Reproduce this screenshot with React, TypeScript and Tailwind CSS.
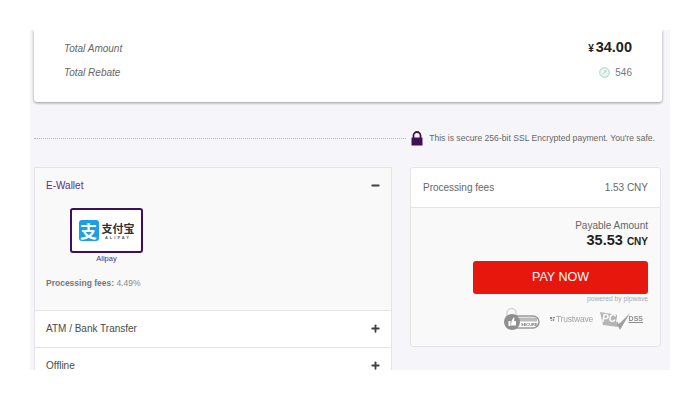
import { Plus, Minus } from "lucide-react";

function AlipayLogo() {
  return (
    <div className="w-[73px] h-[45px] bg-white border-2 border-[#3d0f5c] rounded-[3px] flex items-center justify-center gap-[3px]">
      <div className="w-[20px] h-[21px] bg-[#1a9fe8] rounded-[3px] flex items-center justify-center text-white text-[17px] leading-none font-bold font-['Noto_Sans_CJK_SC',sans-serif]">
        支
      </div>
      <div className="flex flex-col items-center">
        <span className="text-[11px] leading-[13px] font-bold text-[#333] font-['Noto_Sans_CJK_SC',sans-serif]">
          支付宝
        </span>
        <span className="text-[4px] leading-[5px] tracking-[2px] font-bold text-[#555]">ALIPAY</span>
      </div>
    </div>
  );
}

function SecureBadge() {
  return (
    <div className="relative w-[37px] h-[24px]">
      <svg width="37" height="24" viewBox="0 0 37 24" className="absolute left-0 top-0">
        <path d="M4 9 V6 a4.500 4.500 0 0 1 9 0 V9" fill="none" stroke="#d5d5d5" strokeWidth="1.500" />
        <rect x="3" y="9" width="33" height="12" rx="6" fill="#fff" stroke="#999" strokeWidth="1.500" />
        <rect x="16" y="10.500" width="18" height="4" fill="#bbb" />
        <circle cx="9" cy="15" r="8" fill="#8f8f8f" />
        <path d="M5.500 14 h2 v5 h-2z M8.500 14 l2 -3.500 1 .5 -.5 3 h2 v4.500 h-5z" fill="#fff" />
      </svg>
      <span className="absolute left-[18px] top-[15px] text-[4px] leading-[5px] font-bold text-[#777]">SECURE</span>
    </div>
  );
}

function TrustwaveBadge() {
  return (
    <div className="w-[43px] flex items-center gap-[1px] text-[#a3a3a3]">
      <svg width="7" height="6" viewBox="0 0 7 6">
        <path d="M0 0h3v3H0z M4 0h3v2H4z M1 4h2v2H1z M4 3h2v3H4z" fill="#8a8a8a" />
      </svg>
      <span className="text-[8.500px] leading-none tracking-[-0.2px]">Trustwave</span>
    </div>
  );
}

function PciBadge() {
  return (
    <div className="flex items-start w-[43px]">
      <div className="relative w-[30px] h-[18px]">
        <svg width="30" height="18" viewBox="0 0 30 18" className="absolute left-0 top-0">
          <path d="M0 0 L18 3 V15 L3 13 Z" fill="#b5b5b5" />
          <path d="M17 12 L20 18 L30 1 L20 11 Z" fill="#a0a0a0" />
        </svg>
        <span className="absolute left-[2px] top-[2px] text-[10px] leading-none font-bold italic text-white">PCI</span>
      </div>
      <span className="text-[7px] leading-[9px] font-bold text-[#8c8c8c] underline mt-[2px]">DSS</span>
    </div>
  );
}

function LockIcon() {
  return (
    <svg width="12" height="15" viewBox="0 0 12 15">
      <path d="M2.500 7 V4.500 a3.500 3.500 0 0 1 7 0 V7" fill="none" stroke="#421059" strokeWidth="1.800" />
      <rect x="0.500" y="6.500" width="11" height="8" rx="0.500" fill="#421059" />
    </svg>
  );
}

function RebateIcon() {
  return (
    <svg width="11" height="11" viewBox="0 0 11 11">
      <circle cx="5.500" cy="5.500" r="4.800" fill="#eef6f3" stroke="#a5cfc3" strokeWidth="1" />
      <path d="M3.500 7.500 L7 3.500 M5 3.800 L7 3.500 L7 5.500" fill="none" stroke="#a5cfc3" strokeWidth="0.800" />
    </svg>
  );
}

function MethodRow({ label }: { label: string }) {
  return (
    <div className="h-[37px] shrink-0 bg-white border-t border-[#e4e4e8] flex items-center justify-between pl-[11px] pr-[10px] pb-[2px] text-[10px] text-[#4a4a4a]">
      <span>{label}</span>
      <Plus size={11} strokeWidth={4} color="#3f3f46" />
    </div>
  );
}

export default function App() {
  return (
    <div className="h-[400px] bg-white py-[30px] px-[30px] font-['Liberation_Sans',sans-serif]">
      <div className="h-[340px] bg-[#f6f6fa] overflow-hidden px-[4px]">
        {/* Totals */}
        <div className="w-[628px] h-[72px] bg-white rounded-b-[3px] shadow-[0_1px_3px_rgba(0,0,0,0.4)] pt-[8px] pl-[30px] pr-[30px]">
          <div className="h-[20px] flex items-center justify-between">
            <span className="text-[10px] italic text-[#666]">Total Amount</span>
            <span className="font-bold text-[14.500px] text-[#222] flex items-baseline gap-[2px]">
              <span className="text-[10px]">¥</span>34.00
            </span>
          </div>
          <div className="h-[20px] mt-[4px] flex items-center justify-between">
            <span className="text-[10px] italic text-[#666]">Total Rebate</span>
            <span className="flex items-center gap-[5px] text-[10px] text-[#777]">
              <RebateIcon />
              546
            </span>
          </div>
        </div>

        {/* Secure note */}
        <div className="w-[628px] h-[16px] mt-[28px] flex items-center pr-[7px]">
          <div className="flex-1 border-t border-dotted border-[#b5b5b8]" />
          <div className="ml-[5px] mr-[6px]">
            <LockIcon />
          </div>
          <span className="text-[8.600px] text-[#666]">This is secure 256-bit SSL Encrypted payment. You're safe.</span>
        </div>

        <div className="flex items-start mt-[21px]">
          {/* Payment methods */}
          <div className="w-[358px] border border-[#e4e4e8] flex flex-col">
            <div className="h-[142px] bg-[#f9f9fa] pl-[11px] pr-[10px] shrink-0">
              <div className="h-[35px] flex items-center justify-between text-[10px] text-[#5f2d80]">
                <span>E-Wallet</span>
                <Minus size={11} strokeWidth={4} color="#3f3f46" />
              </div>
              <div className="w-[73px] ml-[24px] mt-[5px] flex flex-col items-center">
                <AlipayLogo />
                <span className="text-[7.500px] leading-[10px] mt-[1px] text-[#572a75]">Alipay</span>
              </div>
              <p className="text-[8.500px] mt-[13px] text-[#888]">
                <span className="font-bold text-[#777]">Processing fees:</span> 4.49%
              </p>
            </div>
            <MethodRow label="ATM / Bank Transfer" />
            <MethodRow label="Offline" />
          </div>

          {/* Summary */}
          <div className="w-[251px] ml-[18px] h-[180px] border border-[#e4e4e8] rounded-[3px] bg-[#f9f9fa]">
            <div className="h-[40px] bg-white rounded-t-[3px] border-b border-[#e4e4e8] flex items-center justify-between pl-[12px] pr-[12px] text-[10px] text-[#666]">
              <span>Processing fees</span>
              <span>1.53 CNY</span>
            </div>
            <div className="pr-[12px] flex flex-col items-end">
              <span className="text-[10px] leading-[12px] mt-[12px] text-[#666]">Payable Amount</span>
              <span className="font-bold text-[14.500px] leading-[17px] text-[#222]">
                35.53 <span className="text-[10px]">CNY</span>
              </span>
              <button className="w-[175px] h-[33px] mt-[11px] bg-[#e7170d] rounded-[3px] text-white text-[12.500px]">
                PAY NOW
              </button>
              <span className="text-[6.700px] leading-[9px] text-[#aaa]">powered by pipwave</span>
              <div className="self-stretch flex items-start justify-end gap-[7px] mt-[4px] pr-[5px] blur-[0.3px]">
                <SecureBadge />
                <div className="mt-[8px] ml-[3px]">
                  <TrustwaveBadge />
                </div>
                <div className="mt-[5px]">
                  <PciBadge />
                </div>
              </div>
            </div>
          </div>
        </div>
      </div>
    </div>
  );
}
